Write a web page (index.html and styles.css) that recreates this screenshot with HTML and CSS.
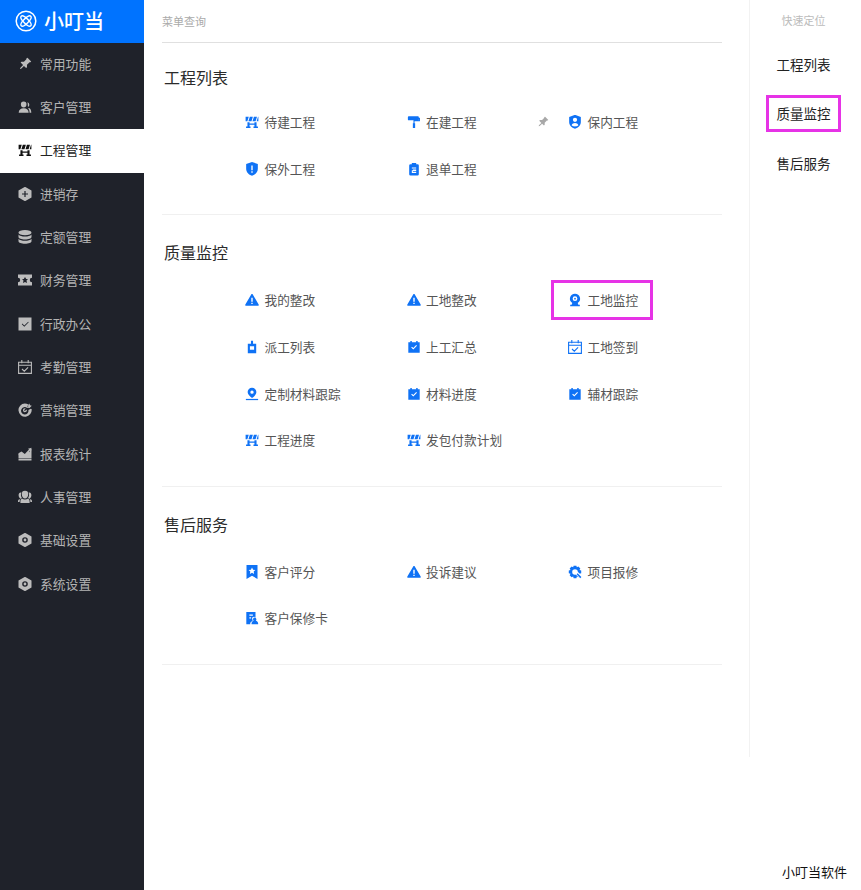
FILE: index.html
```html
<!DOCTYPE html>
<html lang="zh-CN">
<head>
<meta charset="utf-8">
<title>小叮当</title>
<link rel="stylesheet" href="styles.css">
</head>
<body>
<svg class="defs" aria-hidden="true">
  <symbol id="i-logo" viewBox="0 0 22 22"><circle cx="11" cy="11" r="9.800" fill="none" stroke="currentColor" stroke-width="1.500"/><g fill="none" stroke="currentColor" stroke-width="1.400"><ellipse cx="11" cy="11" rx="6.800" ry="2.400" transform="rotate(45 11 11)"/><ellipse cx="11" cy="11" rx="6.800" ry="2.400" transform="rotate(-45 11 11)"/></g></symbol>
  <symbol id="i-pin" viewBox="0 0 16 16"><path transform="rotate(45 8 8)" d="M5 1h6v1.200l-.8.6V7l2 2v1.400H8.700V15L8 16l-.7-1v-4.600H3.300V9l2-2V2.800L4.500 2.200z"/></symbol>
  <symbol id="i-users" viewBox="0 0 16 16"><path d="M6.500 1.800a3.200 3.200 0 0 1 3.200 3.400c0 2-1.300 3.400-3.200 3.400S3.300 7.200 3.300 5.200a3.200 3.200 0 0 1 3.200-3.400zM.8 14.500c0-3.200 2.200-5 5.700-5s5.700 1.800 5.700 5zM10.800 2.500a3 3 0 0 1 .6 5.500c-.2-2-.1-3.600-.6-5.500zM12.500 9.200c1.700.6 2.700 2.500 2.700 5.300h-2c0-2-.4-3.800-1.700-4.800z"/></symbol>
  <symbol id="i-barrier" viewBox="0 0 16 16"><path d="M.7 2H4.300L2.700 7.200H.7zM5.500 2H9L7.400 7.200H3.900zM10.200 2h3.500l-1.600 5.200H8.600zM14.900 2h.4v5.200h-2z"/><path d="M2.800 8.200h2.400v1.400h5.600V8.200h2.400V13h1.600v1.800H9.700V13h1.100v-1.800H5.200V13h1.100v1.800H1.200V13h1.600z"/></symbol>
  <symbol id="i-hex" viewBox="1 1 14 14"><path fill-rule="evenodd" d="M8 .8l6.500 3.600v7.200L8 15.200l-6.500-3.600V4.400zM7.400 5v2.400H5v1.200h2.400V11h1.200V8.600H11V7.400H8.600V5z"/></symbol>
  <symbol id="i-db" viewBox="1 1 14 14"><ellipse cx="8" cy="3.700" rx="6.500" ry="2.600"/><path d="M1.500 5.600C2.500 7 5.300 7.600 8 7.600s5.500-.6 6.500-2v2.400C14.500 9.500 11.600 10.500 8 10.500S1.500 9.500 1.500 8zM1.500 9.800c1 1.400 3.800 2 6.500 2s5.500-.6 6.500-2v2.500c0 1.500-2.900 2.500-6.500 2.500s-6.500-1-6.500-2.500z"/></symbol>
  <symbol id="i-ticket" viewBox="1 1 14 14"><path fill-rule="evenodd" d="M1 2.500h14v3.300a2.200 2.200 0 0 0 0 4.400v3.300H1v-3.300a2.200 2.200 0 0 0 0-4.400zM8 5L6.800 7H5l1.500 1.500L6 11l2-1 2 1-.5-2.500L11 7H9.200z"/></symbol>
  <symbol id="i-check" viewBox="1 1 14 14"><path fill-rule="evenodd" d="M1.500 1.500h13v13h-13zM4.800 8.300l2.500 2.500 4.400-4.600-.5-.5-3.900 3.900-2-2z"/></symbol>
  <symbol id="i-cal" viewBox="1 1 14 14"><path fill="none" stroke="currentColor" stroke-width="1.100" d="M1.600 3.200h12.800v11.200H1.600zM1.600 6.200h12.800M4.800 1v3.200M11.200 1v3.200M5 10l2.300 2.200 3.800-3.800"/></symbol>
  <symbol id="i-target" viewBox="1 1 14 14"><path fill-rule="evenodd" d="M7.800 1.500c1.300 0 2.500.4 3.500 1l-.2 2.400-1 1A3.700 3.700 0 1 0 11.400 8l2.300-1.200.9.300A6.600 6.600 0 1 1 7.800 1.500zM7.800 6.300c.3 0 .6.100.9.200L7 8.200l.9.9 1.700-1.700A1.900 1.900 0 1 1 7.800 6.300zM12.400 1.500l.6 1.700 1.800.5-2.300 2.400-1.700-.3-.3-1.700z"/></symbol>
  <symbol id="i-chart" viewBox="1 1 14 14"><path d="M1.500 14.500h13V13H1.500zM1.500 12.600V8.400l3-1.900 3.400 2.600 3.500-3.800 1.200 1V4.200l1.900-1.400v9.800z"/><path d="M1.500 7.300l3-1.900 3.300 2.500 4.200-4.400-1-.8L14.500 1.800l-.4 3.400-1-.8-5.100 5.600L4.500 7.400 1.500 9.200z"/></symbol>
  <symbol id="i-people" viewBox="1 1 14 14"><path d="M8 1.800a3.200 3.200 0 0 1 3.200 3.400C11.200 7.600 9.800 9.400 8 9.400S4.800 7.600 4.800 5.200A3.200 3.200 0 0 1 8 1.800zM5 9.500c1.600 1.300 4.400 1.300 6 0 1 .5 1.500 1.300 1.600 2.700V14H3.400v-1.800c.1-1.400.6-2.200 1.600-2.700zM3.700 3.400c.3 0 .5 0 .7.100-.9 2-.4 4 .5 5.500-.6.400-1 .6-1.500.8-1-.8-1.800-2-1.800-3.700 0-1.500.8-2.700 2.100-2.700zM12.300 3.400c1.300 0 2.100 1.200 2.100 2.700 0 1.700-.8 2.900-1.800 3.700-.5-.2-.9-.4-1.500-.8.9-1.500 1.400-3.500.5-5.500.2-.1.400-.1.700-.1zM1 12.200c0-1 .6-1.700 1.500-2 .4.300.7.400.5.700-.3.400-.4 1-.4 2H1zM15 12.200c0-1-.6-1.700-1.500-2-.4.300-.7.400-.5.700.3.400.4 1 .4 2H15z"/></symbol>
  <symbol id="i-nut" viewBox="1 1 14 14"><path fill-rule="evenodd" d="M8 .8l6.500 3.600v7.200L8 15.200l-6.500-3.600V4.400zM8 5.200a2.800 2.800 0 1 0 0 5.600 2.800 2.800 0 0 0 0-5.600zM8 6.600a1.400 1.400 0 1 1 0 2.800 1.400 1.400 0 0 1 0-2.800z"/></symbol>
  <symbol id="i-roller" viewBox="0 0 16 16"><path d="M2 1.500h10.500a1 1 0 0 1 1 1V3h1.300v4.200H8.600v2.300h.7v5.300H6.700V9.500h.7V6h6.200V4.500h-.1V5a1 1 0 0 1-1 1H2a1 1 0 0 1-1-1V2.500a1 1 0 0 1 1-1z"/></symbol>
  <symbol id="i-shield" viewBox="1 1 14 14.400"><path fill-rule="evenodd" d="M8 1l6 2v5c0 3.500-2.500 6-6 7.200C4.500 14 2 11.500 2 8V3zM7.300 4.500v5h1.400v-5zM7.300 10.500v1.500h1.400v-1.500z"/></symbol>
  <symbol id="i-shield-user" viewBox="1 1 14 14.400"><path fill-rule="evenodd" d="M8 .8l6 2.200v5.200c0 3.300-2.500 5.800-6 7C4.500 14 2 11.500 2 8.200V3zM8 3.800a2.200 2.200 0 1 0 0 4.400 2.200 2.200 0 0 0 0-4.400zM4.500 11.500c1.800 1.600 5.200 1.600 7 0C11 10 9.500 9.200 8 9.200S5 10 4.500 11.500z"/></symbol>
  <symbol id="i-clip" viewBox="0 0 16 16"><path fill-rule="evenodd" d="M5.500 1h5v1.500H12a1.500 1.500 0 0 1 1.500 1.500v10a1.500 1.500 0 0 1-1.500 1.500H4A1.500 1.500 0 0 1 2.500 14V4A1.500 1.500 0 0 1 4 2.500h1.500zM5.500 6.200v1.200h5V6.200zM5.500 8.500v4h5v-1.200H6.700V10.700h3.800V8.500H6.700V9.300H5.500z"/></symbol>
  <symbol id="i-warn" viewBox="0 0 16 16"><path fill-rule="evenodd" d="M8 1.200c.4 0 .7.2.9.5l6.700 11.400c.4.700-.1 1.600-.9 1.600H1.300c-.8 0-1.300-.9-.9-1.600L7.100 1.700c.2-.3.500-.5.900-.5zM7.200 5.500v4.500h1.600V5.500zM7.200 11v1.600h1.600V11z"/></symbol>
  <symbol id="i-cam" viewBox="0 0 16 16"><path fill-rule="evenodd" d="M8 .8a5.800 5.800 0 0 1 3.100 10.700l.7 2H13.500v1.700h-11v-1.700h1.700l.7-2A5.800 5.800 0 0 1 8 .8zM8 3.800a2.700 2.700 0 1 0 0 5.400 2.700 2.700 0 0 0 0-5.400zM8 5.500a1 1 0 1 1 0 2 1 1 0 0 1 0-2z"/></symbol>
  <symbol id="i-badge" viewBox="0 0 16 16"><path fill-rule="evenodd" d="M6.800 .8h2.400v3.500h3.600v10.900H3.200V4.300h3.600zM5.600 7v4h4.800V7z"/></symbol>
  <symbol id="i-calcheck" viewBox="0 0 16 16"><path fill-rule="evenodd" d="M3.800 1h1.700v1.500h5V1h1.700v1.500h2.300v12H1.500v-12h2.300zM4.800 8.500l2.400 2.400 4.200-4.300-.9-.8-3.300 3.400-1.500-1.500z"/></symbol>
  <symbol id="i-loc" viewBox="0 0 16 16"><path fill-rule="evenodd" d="M8 .8a5 5 0 0 1 5 5c0 2.700-2.700 5.300-5 6.800-2.300-1.500-5-4.100-5-6.800a5 5 0 0 1 5-5zM8 4a1.900 1.900 0 1 0 0 3.800A1.900 1.900 0 0 0 8 4z"/><path d="M1 13.600h14V15H1z"/></symbol>
  <symbol id="i-book" viewBox="1 1 14 14"><path fill-rule="evenodd" d="M2.500 1h11v14L8 11.700 2.500 15zM8 3.500L6.900 5.700 4.600 6l1.700 1.600-.4 2.300L8 8.800l2.100 1.100-.4-2.300L11.400 6l-2.300-.3z"/></symbol>
  <symbol id="i-gear" viewBox="0 0 16 16"><path fill-rule="evenodd" d="M6.400.8h3.200l.5 1.900 1.800-.9 2.200 2.200-1 1.800 2 .5v3.200l-2 .5 1 1.800-2.200 2.200-1.800-1-.5 2H6.400l-.5-2-1.800 1-2.200-2.200 1-1.800-2-.5V6.300l2-.5-1-1.800 2.200-2.200 1.800.9zM8 4.800a3.200 3.200 0 1 0 0 6.400 3.200 3.200 0 0 0 0-6.400z"/><path class="gear-gap" d="M9.500 8.700l1.300-1.300 5 5-2.700 2.700-5-5z"/><path d="M9.800 10.700l1.200-1.200 4.300 4.200-1.300 1.300z"/></symbol>
  <symbol id="i-doc" viewBox="0 0 16 16"><path fill-rule="evenodd" d="M1.500 1H12v6.500l-1.500-1-2 .5L8 9l1 1.500L6 13.500V15H1.500zM5 4v1.500h4V4zM5 7v1.500h2V7z"/><path d="M11 7.500a2 2 0 0 1 1.300 3.500c1.600.4 2.700 1.500 2.700 3v1H7.500v-1c0-1.500 1.100-2.600 2.400-3A2 2 0 0 1 11 7.500z"/></symbol>
</svg>

<div class="app">
  <aside class="sidebar">
    <div class="brand"><svg class="brand-ico"><use href="#i-logo"/></svg><span class="brand-name">小叮当</span></div>
    <nav class="menu">
      <a class="menu-item"><svg class="ico"><use href="#i-pin"/></svg>常用功能</a>
      <a class="menu-item"><svg class="ico"><use href="#i-users"/></svg>客户管理</a>
      <a class="menu-item is-active"><svg class="ico"><use href="#i-barrier"/></svg>工程管理</a>
      <a class="menu-item"><svg class="ico"><use href="#i-hex"/></svg>进销存</a>
      <a class="menu-item"><svg class="ico"><use href="#i-db"/></svg>定额管理</a>
      <a class="menu-item"><svg class="ico"><use href="#i-ticket"/></svg>财务管理</a>
      <a class="menu-item"><svg class="ico"><use href="#i-check"/></svg>行政办公</a>
      <a class="menu-item"><svg class="ico"><use href="#i-cal"/></svg>考勤管理</a>
      <a class="menu-item"><svg class="ico"><use href="#i-target"/></svg>营销管理</a>
      <a class="menu-item"><svg class="ico"><use href="#i-chart"/></svg>报表统计</a>
      <a class="menu-item"><svg class="ico"><use href="#i-people"/></svg>人事管理</a>
      <a class="menu-item"><svg class="ico"><use href="#i-nut"/></svg>基础设置</a>
      <a class="menu-item"><svg class="ico"><use href="#i-nut"/></svg>系统设置</a>
    </nav>
  </aside>

  <main class="content">
    <header class="search">菜单查询</header>

    <section class="section section-first">
      <h2 class="section-title">工程列表</h2>
      <div class="links">
        <a class="link"><svg class="ico"><use href="#i-barrier"/></svg>待建工程</a>
        <a class="link"><svg class="ico"><use href="#i-roller"/></svg>在建工程</a>
        <a class="link"><svg class="ico pin"><use href="#i-pin"/></svg><svg class="ico"><use href="#i-shield-user"/></svg>保内工程</a>
        <a class="link"><svg class="ico"><use href="#i-shield"/></svg>保外工程</a>
        <a class="link"><svg class="ico"><use href="#i-clip"/></svg>退单工程</a>
      </div>
    </section>

    <section class="section">
      <h2 class="section-title">质量监控</h2>
      <div class="links">
        <a class="link"><svg class="ico"><use href="#i-warn"/></svg>我的整改</a>
        <a class="link"><svg class="ico"><use href="#i-warn"/></svg>工地整改</a>
        <a class="link link-marked"><svg class="ico"><use href="#i-cam"/></svg>工地监控</a>
        <a class="link"><svg class="ico"><use href="#i-badge"/></svg>派工列表</a>
        <a class="link"><svg class="ico"><use href="#i-calcheck"/></svg>上工汇总</a>
        <a class="link"><svg class="ico"><use href="#i-cal"/></svg>工地签到</a>
        <a class="link"><svg class="ico"><use href="#i-loc"/></svg>定制材料跟踪</a>
        <a class="link"><svg class="ico"><use href="#i-calcheck"/></svg>材料进度</a>
        <a class="link"><svg class="ico"><use href="#i-calcheck"/></svg>辅材跟踪</a>
        <a class="link"><svg class="ico"><use href="#i-barrier"/></svg>工程进度</a>
        <a class="link"><svg class="ico"><use href="#i-barrier"/></svg>发包付款计划</a>
      </div>
    </section>

    <section class="section">
      <h2 class="section-title">售后服务</h2>
      <div class="links">
        <a class="link"><svg class="ico"><use href="#i-book"/></svg>客户评分</a>
        <a class="link"><svg class="ico"><use href="#i-warn"/></svg>投诉建议</a>
        <a class="link"><svg class="ico"><use href="#i-gear"/></svg>项目报修</a>
        <a class="link"><svg class="ico"><use href="#i-doc"/></svg>客户保修卡</a>
      </div>
    </section>
  </main>

  <aside class="rail">
    <div class="rail-title">快速定位</div>
    <a class="rail-item">工程列表</a>
    <a class="rail-item rail-marked">质量监控</a>
    <a class="rail-item">售后服务</a>
  </aside>
</div>
<div class="vendor">小叮当软件</div>
</body>
</html>
```

FILE: styles.css
```css
* { box-sizing: border-box; }
html, body { margin: 0; padding: 0; height: 100%; background: #fff; }
body {
  font-family: "Noto Sans CJK SC", "Noto Sans", sans-serif;
  font-size: 13px;
  color: #555;
  overflow: hidden;
  position: relative;
}
.defs { display: none; }
.app { display: flex; align-items: flex-start; height: 890px; }

.ico { width: 14px; height: 14px; flex: none; fill: currentColor; }
.gear-gap { fill: #fff; }

.sidebar { width: 144px; height: 890px; flex: none; background: #1f222a; }
.brand {
  height: 42.67px;
  background: #0073ff;
  color: #fff;
  display: flex;
  align-items: center;
  padding-left: 15px;
  gap: 7px;
}
.brand-ico { width: 22px; height: 22px; fill: none; }
.brand-name { font-size: 20px; line-height: 24px; font-weight: 500; }
.menu-item {
  height: 43.33px;
  display: flex;
  align-items: center;
  gap: 8px;
  padding: 0 0 1.5px 18px;
  font-size: 12.8px;
  color: #b4b4b4;
  line-height: 18px;
}
.menu-item .ico { color: #bcbcbc; }
.menu-item.is-active { background: #fff; color: #222; }
.menu-item.is-active .ico { color: #111; }

.content { width: 560px; margin-left: 18px; flex: none; }
.search {
  height: 43px;
  border-bottom: 1px solid #e0e0e0;
  font-size: 11px;
  line-height: 43px;
  color: #aaa;
}
.section { padding: 25px 0 22px 2px; border-bottom: 1px solid #f0f0f0; }
.section-first { padding-top: 22px; }
.section-title {
  margin: 0 0 12.67px;
  font-size: 16px;
  line-height: 24px;
  font-weight: 400;
  color: #2b2b2b;
}
.section-first .section-title { margin-bottom: 10.17px; }
.links {
  display: grid;
  grid-template-columns: repeat(3, 161.5px);
  grid-auto-rows: 46.67px;
  padding-left: 81px;
}
.link {
  display: inline-flex;
  align-items: center;
  gap: 5.5px;
  justify-self: start;
  position: relative;
  font-size: 12.7px;
  color: #555;
  line-height: 18px;
}
.link .ico { color: #0f72f5; }
.link .ico.pin {
  position: absolute;
  left: -31px;
  top: 50%;
  width: 12px;
  height: 12px;
  margin-top: -6px;
  color: #a8a8a8;
}
.link-marked::after {
  content: "";
  position: absolute;
  left: -17px;
  right: -15px;
  top: 3.33px;
  bottom: 3.33px;
  border: 3px solid #e633e6;
}

.rail {
  width: 112px;
  height: 757px;
  margin-left: 27px;
  flex: none;
  border-left: 1px solid #f2f2f2;
  display: flex;
  flex-direction: column;
  align-items: center;
  padding-right: 4px;
}
.rail-title {
  font-size: 11px;
  line-height: 16px;
  color: #bbb;
  margin: 12px 0 11px;
}
.rail-item {
  font-size: 13.5px;
  color: #222;
  line-height: 18px;
  height: 49.5px;
  display: flex;
  align-items: center;
  position: relative;
}
.rail-marked::after {
  content: "";
  position: absolute;
  left: -11px;
  right: -10px;
  top: 6px;
  bottom: 6px;
  border: 3px solid #e633e6;
}
.vendor {
  position: absolute;
  right: 14px;
  bottom: 9px;
  color: #111;
  line-height: 18px;
}
```
